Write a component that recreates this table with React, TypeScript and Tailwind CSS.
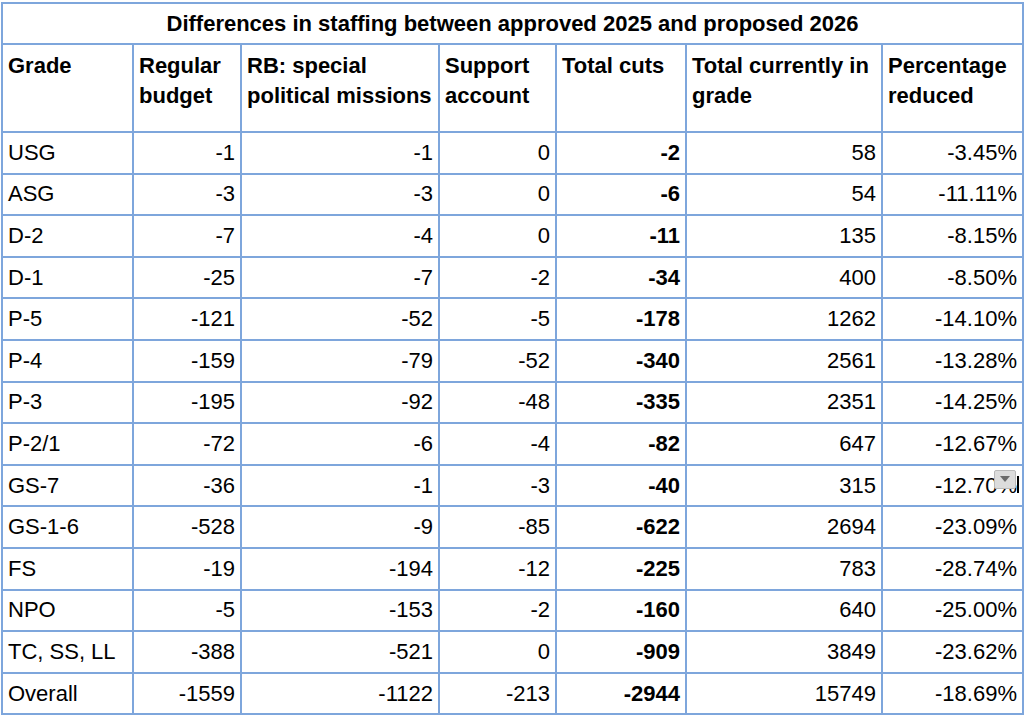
import * as React from "react";

type Row = {
  grade: string;
  regular: string;
  rb: string;
  support: string;
  total: string;
  current: string;
  pct: string;
};

const rows: Row[] = [
  { grade: "USG", regular: "-1", rb: "-1", support: "0", total: "-2", current: "58", pct: "-3.45%" },
  { grade: "ASG", regular: "-3", rb: "-3", support: "0", total: "-6", current: "54", pct: "-11.11%" },
  { grade: "D-2", regular: "-7", rb: "-4", support: "0", total: "-11", current: "135", pct: "-8.15%" },
  { grade: "D-1", regular: "-25", rb: "-7", support: "-2", total: "-34", current: "400", pct: "-8.50%" },
  { grade: "P-5", regular: "-121", rb: "-52", support: "-5", total: "-178", current: "1262", pct: "-14.10%" },
  { grade: "P-4", regular: "-159", rb: "-79", support: "-52", total: "-340", current: "2561", pct: "-13.28%" },
  { grade: "P-3", regular: "-195", rb: "-92", support: "-48", total: "-335", current: "2351", pct: "-14.25%" },
  { grade: "P-2/1", regular: "-72", rb: "-6", support: "-4", total: "-82", current: "647", pct: "-12.67%" },
  { grade: "GS-7", regular: "-36", rb: "-1", support: "-3", total: "-40", current: "315", pct: "-12.70%" },
  { grade: "GS-1-6", regular: "-528", rb: "-9", support: "-85", total: "-622", current: "2694", pct: "-23.09%" },
  { grade: "FS", regular: "-19", rb: "-194", support: "-12", total: "-225", current: "783", pct: "-28.74%" },
  { grade: "NPO", regular: "-5", rb: "-153", support: "-2", total: "-160", current: "640", pct: "-25.00%" },
  { grade: "TC, SS, LL", regular: "-388", rb: "-521", support: "0", total: "-909", current: "3849", pct: "-23.62%" },
  { grade: "Overall", regular: "-1559", rb: "-1122", support: "-213", total: "-2944", current: "15749", pct: "-18.69%" },
];

const cell = "border-2 border-[#7ea6dc] px-[5px] align-middle";
const head = "border-2 border-[#7ea6dc] px-[5px] pt-[6px] align-top text-left font-bold";

// the little spreadsheet dropdown handle sitting over the GS-7 cell
function DropHandle() {
  return (
    <>
      <div className="absolute right-[1px] top-[-4px] flex h-[19px] w-[22px] items-center justify-center rounded-[2px] border border-[#b9b9b9] bg-[#dcdcdc]">
        <svg width="12" height="8" viewBox="0 0 12 8" aria-hidden="true">
          <path d="M1 1 L11 1 L6 7 Z" fill="#6b6b6b" />
        </svg>
      </div>
      <div className="absolute right-[-2px] top-[2px] h-[17px] w-[2px] bg-black" />
    </>
  );
}

export default function App() {
  return (
    <div className="min-h-screen bg-white pl-[1px] pt-[2px] font-['Liberation_Sans',Arial,sans-serif] text-[22px] text-black">
      <table className="w-[1021px] table-fixed border-collapse">
        <colgroup>
          <col className="w-[131px]" />
          <col className="w-[108px]" />
          <col className="w-[198px]" />
          <col className="w-[117px]" />
          <col className="w-[130px]" />
          <col className="w-[196px]" />
          <col className="w-[141px]" />
        </colgroup>
        <thead>
          <tr className="h-[41px]">
            <th colSpan={7} className="border-2 border-[#7ea6dc] text-center align-middle text-[22px] font-bold">
              Differences in staffing between approved 2025 and proposed 2026
            </th>
          </tr>
          <tr className="h-[88px] leading-[30px]">
            <th className={head}>Grade</th>
            <th className={head}>Regular budget</th>
            <th className={head}>RB: special political missions</th>
            <th className={head}>Support account</th>
            <th className={head}>Total cuts</th>
            <th className={head}>Total currently in grade</th>
            <th className={head}>Percentage reduced</th>
          </tr>
        </thead>
        <tbody>
          {rows.map((r) => (
            <tr key={r.grade} className="h-[41.6px] leading-[24px]">
              <td className={cell}>{r.grade}</td>
              <td className={`${cell} text-right`}>{r.regular}</td>
              <td className={`${cell} text-right`}>{r.rb}</td>
              <td className={`${cell} text-right`}>{r.support}</td>
              <td className={`${cell} text-right font-bold`}>{r.total}</td>
              <td className={`${cell} text-right`}>{r.current}</td>
              <td className={`${cell} text-right`}>
                <div className="relative">
                  {r.pct}
                  {r.grade === "GS-7" && <DropHandle />}
                </div>
              </td>
            </tr>
          ))}
        </tbody>
      </table>
    </div>
  );
}
